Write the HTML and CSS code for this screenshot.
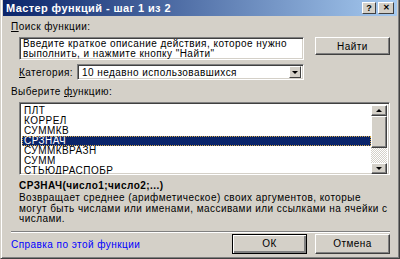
FILE: index.html
```html
<!DOCTYPE html>
<html lang="ru">
<head>
  <meta charset="UTF-8">
  <title>Мастер функций - шаг 1 из 2</title>
  <link rel="stylesheet" href="styles.css">
</head>
<body>
  <div class="window">
    <div class="titlebar">
      <span class="title">Мастер функций - шаг 1 из 2</span>
      <div class="title-buttons">
        <span class="tbtn">?</span>
        <span class="tbtn close">✕</span>
      </div>
    </div>

    <div class="content">
      <div class="label"><u>П</u>оиск функции:</div>
      <div class="search-row">
        <div class="field search-text">Введите краткое описание действия, которое нужно выполнить, и нажмите кнопку "Найти"</div>
        <button class="btn find">Найти</button>
      </div>
      <div class="category-row">
        <span class="cat-label"><u>К</u>атегория:</span>
        <div class="field select">
          <span>10 недавно использовавшихся</span>
          <span class="drop-btn"><span class="arrow"></span></span>
        </div>
      </div>

      <div class="label pick">Выберите <u>ф</u>ункцию:</div>
      <div class="field listbox">
        <ul class="items">
          <li>ПЛТ</li>
          <li>КОРРЕЛ</li>
          <li>СУММКВ</li>
          <li class="selected">СРЗНАЧ</li>
          <li>СУММКВРАЗН</li>
          <li>СУММ</li>
          <li>СТЬЮДРАСПОБР</li>
        </ul>
        <div class="scrollbar">
          <span class="sb-btn"><span class="arrow up"></span></span>
          <span class="thumb"></span>
          <span class="track"></span>
          <span class="sb-btn"><span class="arrow"></span></span>
        </div>
      </div>

      <div class="signature">СРЗНАЧ(число1;число2;...)</div>
      <p class="desc">Возвращает среднее (арифметическое) своих аргументов, которые могут быть числами или именами, массивами или ссылками на ячейки с числами.</p>

      <div class="separator"></div>

      <div class="footer">
        <a class="help" href="#">Справка по этой функции</a>
        <div class="actions">
          <button class="btn default">ОК</button>
          <button class="btn">Отмена</button>
        </div>
      </div>
    </div>
  </div>
</body>
</html>
```

FILE: styles.css
```css
body {
  margin: 0;
  font-family: 'Liberation Sans', Arial, sans-serif;
  font-size: 10px;
  letter-spacing: 0.45px;
  color: #000;
  background: #d4d0c8;
}
.window {
  width: 400px;
  height: 259px;
  box-sizing: border-box;
  background: #d4d0c8;
  border-left: 1px solid #d4d0c8;
  border-right: 1px solid #404040;
  border-bottom: 1px solid #404040;
  box-shadow: inset 1px 0 #fff, inset -1px -1px #808080;
  padding: 0 2px 2px 2px;
}
.titlebar {
  height: 16px;
  display: flex;
  align-items: center;
  justify-content: space-between;
  background: linear-gradient(to right, #0a246a, #a6caf0);
  color: #fff;
  padding: 0 3px 0 3px;
}
.title {
  font-weight: bold;
  font-size: 11px;
  letter-spacing: 0.4px;
}
.title-buttons {
  display: flex;
  gap: 2px;
}
.tbtn {
  width: 14px;
  height: 12px;
  box-sizing: border-box;
  background: #d4d0c8;
  color: #000;
  border: 1px solid;
  border-color: #fff #404040 #404040 #fff;
  font-size: 9px;
  font-weight: bold;
  letter-spacing: 0;
  line-height: 10px;
  text-align: center;
}
.tbtn.close {
  width: 16px;
  font-size: 8px;
}
.content {
  padding: 5px 7px 0 8px;
}
.label {
  line-height: 12px;
}
.field {
  background: #fff;
  box-sizing: border-box;
  border: 1px solid;
  border-color: #808080 #fff #fff #808080;
  box-shadow: inset 1px 1px #404040, inset -1px -1px #d4d0c8;
}
.search-row {
  display: flex;
  justify-content: space-between;
  align-items: flex-start;
  margin: 4px 0 0 8px;
}
.search-text {
  width: 285px;
  height: 23px;
  padding: 1px 3px;
  line-height: 10px;
}
.btn {
  font-family: inherit;
  font-size: 10px;
  letter-spacing: 0.45px;
  color: #000;
  background: #d4d0c8;
  width: 75px;
  height: 18px;
  padding: 0;
  border: 1px solid;
  border-color: #fff #404040 #404040 #fff;
  box-shadow: inset -1px -1px #808080;
}
.category-row {
  display: flex;
  align-items: center;
  gap: 4px;
  margin: 4px 0 0 8px;
  width: 285px;
}
.select {
  flex: 1;
  height: 16px;
  display: flex;
  align-items: center;
  justify-content: space-between;
  padding: 0 2px 0 4px;
}
.drop-btn {
  width: 12px;
  height: 12px;
  box-sizing: border-box;
  background: #d4d0c8;
  border: 1px solid;
  border-color: #fff #404040 #404040 #fff;
  display: flex;
  align-items: center;
  justify-content: center;
}
.arrow {
  width: 0;
  height: 0;
  border-left: 3px solid transparent;
  border-right: 3px solid transparent;
  border-top: 3px solid #000;
}
.arrow.up {
  border-top: none;
  border-bottom: 3px solid #000;
}
.label.pick {
  margin-top: 6px;
}
.listbox {
  margin: 4px 0 0 8px;
  height: 73px;
  display: flex;
  padding: 2px 2px 0 2px;
  overflow: hidden;
}
.items {
  list-style: none;
  margin: 0;
  padding: 1px 0 0 0;
  flex: 1;
}
.items li {
  height: 10px;
  line-height: 10px;
  padding-left: 2px;
}
.items li.selected {
  background: #0a246a;
  color: #fff;
  outline: 1px dotted #d4a84a;
  outline-offset: -1px;
}
.scrollbar {
  width: 16px;
  display: flex;
  flex-direction: column;
}
.sb-btn, .thumb {
  box-sizing: border-box;
  background: #d4d0c8;
  border: 1px solid;
  border-color: #fff #404040 #404040 #fff;
  box-shadow: inset -1px -1px #808080;
}
.sb-btn {
  height: 11px;
  display: flex;
  align-items: center;
  justify-content: center;
}
.thumb {
  height: 33px;
}
.track {
  height: 15px;
  background: repeating-conic-gradient(#fff 0 25%, #d4d0c8 0 50%) 0 0 / 2px 2px;
}
.signature {
  font-weight: bold;
  margin: 5px 0 0 8px;
  line-height: 12px;
}
.desc {
  margin: 1px 0 0 8px;
  line-height: 10.5px;
}
.separator {
  margin-top: 6px;
  border-top: 1px solid #808080;
  border-bottom: 1px solid #fff;
}
.footer {
  display: flex;
  justify-content: space-between;
  align-items: flex-start;
  margin-top: 1px;
}
.help {
  color: #0000ff;
  text-decoration: none;
  margin-top: 5px;
}
.actions {
  display: flex;
  gap: 8px;
}
.actions .btn {
  height: 20px;
}
.btn.default {
  border-color: #000;
  box-shadow: inset 1px 1px #fff, inset -2px -2px #808080;
}
```
